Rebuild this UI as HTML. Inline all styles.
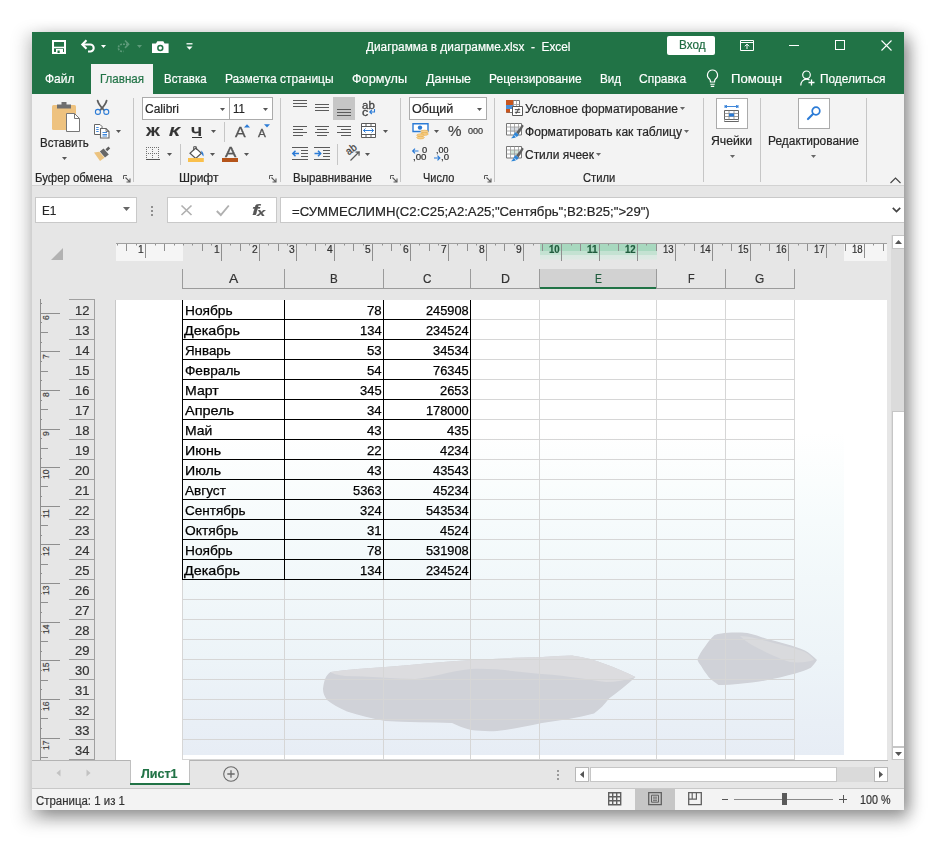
<!DOCTYPE html>
<html lang="ru"><head><meta charset="utf-8"><title>Excel</title><style>
html,body{margin:0;padding:0;background:#fff;}
body{width:936px;height:842px;position:relative;overflow:hidden;font-family:"Liberation Sans",sans-serif;}
.a{position:absolute;box-sizing:border-box;}
.t{position:absolute;white-space:pre;transform-origin:0 50%;-webkit-text-stroke-width:.2px;}
.win{box-shadow:5px 5.7px 16.1px -1.15px rgba(0,0,0,.451),-2.2px 7.2px 14.8px 7.3px rgba(0,0,0,.106);}
svg{overflow:visible}
</style></head><body>
<div class="a win" style="left:32px;top:32px;width:872px;height:778px;background:#e6e6e6"></div><div class="a" style="left:32px;top:32px;width:872px;height:62px;background:#217346;"></div><div class="a" style="left:32px;top:94px;width:872px;height:91px;background:#f3f3f3;"></div><div class="a" style="left:32px;top:185px;width:872px;height:1px;background:#d2d2d2;"></div><div class="a" style="left:91px;top:64px;width:62px;height:30px;background:#f3f3f3;"></div><svg class="a" style="left:52px;top:40px;" width="14" height="14" viewBox="0 0 14 14"><path d="M1 1h12v12h-12z" fill="none" stroke="#fff" stroke-width="2"/><path d="M1 7.500h12" stroke="#fff" stroke-width="1.600"/><path d="M4 9h7v4h-7z" fill="#fff"/><path d="M5.500 10.500h2.200v2.500h-2.200z" fill="#217346"/></svg><svg class="a" style="left:80px;top:39px;" width="16" height="14" viewBox="0 0 16 14"><path d="M2.500 5.500h7.700a3.500 3.500 0 0 1 0 7h-2.200" fill="none" stroke="#fff" stroke-width="2.100"/><path d="M6.500 1.300l-4.200 4.200l4.200 4.200" fill="none" stroke="#fff" stroke-width="2.100"/></svg><svg class="a" style="left:100.0px;top:44.0px;" width="7" height="5" viewBox="0 0 7 5"><path d="M1 1h5l-2.5 3z" fill="#fff"/></svg><svg class="a" style="left:116px;top:39px;" width="16" height="14" viewBox="0 0 16 14"><path d="M12 5.200h-6a3.600 3.600 0 0 0 0 7.200h1.500" fill="none" stroke="#5d9a79" stroke-width="1.600" stroke-dasharray="2 1"/><path d="M9 1.500l3.600 3.700l-3.600 3.700" fill="none" stroke="#5d9a79" stroke-width="1.600"/></svg><svg class="a" style="left:136.0px;top:44.0px;" width="7" height="5" viewBox="0 0 7 5"><path d="M1 1h5l-2.5 3z" fill="#5d9a79"/></svg><svg class="a" style="left:152px;top:41px;" width="17" height="12" viewBox="0 0 17 12"><path d="M0 2.500h4l1.300-2.300h6l1.300 2.300h4v9.500h-16.600z" fill="#fff"/><circle cx="8.300" cy="7" r="3.200" fill="#217346"/><circle cx="8.300" cy="7" r="1.700" fill="#fff"/></svg><svg class="a" style="left:185.5px;top:43px;" width="7" height="8" viewBox="0 0 7 8"><path d="M0.5 0.8h6" stroke="#fff" stroke-width="1.3"/><path d="M0.5 3.5h6l-3 3.2z" fill="#fff"/></svg><span class="t" style="left:366.3px;top:39.0px;line-height:16px;font-size:12px;color:#fff;transform:scaleX(0.9857);">Диаграмма в диаграмме.xlsx  -  Excel</span><div class="a" style="left:667px;top:36px;width:48px;height:19px;background:#fff;border-radius:2px;"></div><span class="t" style="left:678.5px;top:37.3px;line-height:16px;font-size:12.5px;color:#1e6b41;transform:scaleX(0.9370);">Вход</span><svg class="a" style="left:740px;top:40px;" width="14" height="11" viewBox="0 0 14 11"><path d="M0.5 0.5h13v10h-13z" fill="none" stroke="#fff"/><path d="M0.5 2.5h13" stroke="#fff" stroke-width="1"/><path d="M7 9V4.2M4.8 6.3L7 4.1l2.2 2.2" fill="none" stroke="#fff" stroke-width="1"/></svg><div class="a" style="left:789px;top:45px;width:10px;height:1px;background:#fff;"></div><div class="a" style="left:835px;top:40px;width:10px;height:10px;border:1px solid #fff;"></div><svg class="a" style="left:881px;top:40px;" width="11" height="11" viewBox="0 0 11 11"><path d="M0.5 0.5l10 10M10.5 0.5l-10 10" stroke="#fff" stroke-width="1.1"/></svg><span class="t" style="left:44.6px;top:69.8px;line-height:17px;font-size:13px;color:#fff;transform:scaleX(0.9215);">Файл</span><span class="t" style="left:163.8px;top:69.8px;line-height:17px;font-size:13px;color:#fff;transform:scaleX(0.8806);">Вставка</span><span class="t" style="left:225.2px;top:69.8px;line-height:17px;font-size:13px;color:#fff;transform:scaleX(0.9205);">Разметка страницы</span><span class="t" style="left:352.2px;top:69.8px;line-height:17px;font-size:13px;color:#fff;transform:scaleX(0.9732);">Формулы</span><span class="t" style="left:425.7px;top:69.8px;line-height:17px;font-size:13px;color:#fff;transform:scaleX(0.9594);">Данные</span><span class="t" style="left:489.2px;top:69.8px;line-height:17px;font-size:13px;color:#fff;transform:scaleX(0.9220);">Рецензирование</span><span class="t" style="left:599.7px;top:69.8px;line-height:17px;font-size:13px;color:#fff;transform:scaleX(0.8950);">Вид</span><span class="t" style="left:638.7px;top:69.8px;line-height:17px;font-size:13px;color:#fff;transform:scaleX(0.9227);">Справка</span><span class="t" style="left:731.2px;top:69.8px;line-height:17px;font-size:13px;color:#fff;transform:scaleX(1.0086);">Помощн</span><span class="t" style="left:819.7px;top:69.8px;line-height:17px;font-size:13px;color:#fff;transform:scaleX(0.9131);">Поделиться</span><span class="t" style="left:99.7px;top:69.8px;line-height:17px;font-size:13px;color:#217346;transform:scaleX(0.8904);">Главная</span><svg class="a" style="left:706px;top:69px;" width="13" height="20" viewBox="0 0 13 20"><path d="M6.5 1a5 5 0 0 1 3 9c-.8.8-1 1.6-1 3h-4c0-1.400-.2-2.200-1-3a5 5 0 0 1 3-9z" fill="none" stroke="#fff" stroke-width="1.2"/><path d="M4.3 15.200h4.400M4.800 17.400h3.400" stroke="#fff" stroke-width="1.1"/></svg><svg class="a" style="left:800px;top:70px;" width="16" height="17" viewBox="0 0 16 17"><circle cx="6.5" cy="4.8" r="3.8" fill="none" stroke="#fff" stroke-width="1.2"/><path d="M0.8 15.500c0-3.800 2.500-6.300 5.700-6.300c1.200 0 2.200.3 3 .8" fill="none" stroke="#fff" stroke-width="1.2"/><path d="M11.500 9.500v6M8.500 12.500h6" stroke="#fff" stroke-width="1.3"/></svg><div class="a" style="left:133px;top:98px;width:1px;height:84px;background:#c6c6c6;"></div><div class="a" style="left:280px;top:98px;width:1px;height:84px;background:#c6c6c6;"></div><div class="a" style="left:400px;top:98px;width:1px;height:84px;background:#c6c6c6;"></div><div class="a" style="left:494px;top:98px;width:1px;height:84px;background:#c6c6c6;"></div><div class="a" style="left:703px;top:98px;width:1px;height:84px;background:#c6c6c6;"></div><div class="a" style="left:760px;top:98px;width:1px;height:84px;background:#c6c6c6;"></div><div class="a" style="left:866px;top:98px;width:1px;height:84px;background:#c6c6c6;"></div><svg class="a" style="left:51px;top:101px;" width="31" height="32" viewBox="0 0 31 32"><rect x="1" y="4" width="24" height="25" rx="1.500" fill="#eec27f"/><path d="M6 3.500h14v4h-14z" fill="#6f6f6f"/><path d="M10.500 1h5v3h-5z" fill="#6f6f6f"/><path d="M15.500 12.500h8l5 5v13h-13z" fill="#fff" stroke="#777" stroke-width="1"/><path d="M23.500 12.500v5h5" fill="none" stroke="#777" stroke-width="1"/></svg><span class="t" style="left:39.8px;top:134.5px;line-height:16px;font-size:12px;color:#262626;transform:scaleX(0.9580);">Вставить</span><svg class="a" style="left:60.5px;top:155.5px;" width="7" height="5" viewBox="0 0 7 5"><path d="M1 1h5l-2.5 3z" fill="#555"/></svg><svg class="a" style="left:94px;top:100px;" width="16" height="16" viewBox="0 0 16 16"><path d="M3.600 0.600C4.300 3.500 6 6 9.800 9.800M12.600 0.600C11.900 3.500 10.200 6 6.400 9.800" stroke="#5e5e5e" stroke-width="1.900" fill="none" stroke-linecap="round"/><circle cx="3.900" cy="11.900" r="2.500" fill="none" stroke="#2b7bd6" stroke-width="1.100"/><circle cx="12.300" cy="11.900" r="2.500" fill="none" stroke="#2b7bd6" stroke-width="1.100"/></svg><svg class="a" style="left:94px;top:124px;" width="16" height="14" viewBox="0 0 16 14"><path d="M0.500 0.500h5.500l2 2v8h-7.500z" fill="#fff" stroke="#666"/><path d="M6.500 4.500h5.500l3 3v6.500h-8.500z" fill="#fff" stroke="#666" stroke-width="1.100"/><path d="M12 4.500v3h3" fill="none" stroke="#666" stroke-width=".800"/><path d="M8.500 8.500h4.500M8.500 10.500h4.500M8.500 12h4.500" stroke="#2b7bd6" stroke-width=".900"/><path d="M2.200 3.500h2.500M2.200 5.500h2.500M2.200 7.500h2.500" stroke="#2b7bd6" stroke-width=".900"/></svg><svg class="a" style="left:115.0px;top:129.0px;" width="7" height="5" viewBox="0 0 7 5"><path d="M1 1h5l-2.5 3z" fill="#555"/></svg><svg class="a" style="left:93px;top:146px;" width="18" height="16" viewBox="0 0 18 16"><path d="M12.500 3.200l3-2.700l1.700 2l-3 2.700z" fill="#5e5e5e"/><path d="M6.800 5.600l3.800-3.200l5.200 6l-3.800 3.200z" fill="#666"/><path d="M1 6.600l5.300-.800l5.200 6l-4.500 3.200c-2.200-2.800-3.800-5.600-6-8.400z" fill="#ecc37f"/></svg><span class="t" style="left:34.8px;top:170.3px;line-height:16px;font-size:12px;color:#262626;transform:scaleX(0.9484);">Буфер обмена</span><svg class="a" style="left:122.5px;top:174.5px;" width="8" height="8" viewBox="0 0 8 8"><path d="M0.500 4v-3.500h3.500" fill="none" stroke="#5a5a5a" stroke-width="1"/><path d="M2.500 2.500l4.300 4.300M7 3.500v3.500h-3.500" fill="none" stroke="#5a5a5a" stroke-width="1.100"/></svg><div class="a" style="left:142px;top:97px;width:88px;height:23px;background:#fff;border:1px solid #ababab;"></div><div class="a" style="left:229px;top:97px;width:44px;height:23px;background:#fff;border:1px solid #ababab;"></div><span class="t" style="left:145.3px;top:100.5px;line-height:16px;font-size:12px;color:#262626;transform:scaleX(1.0007);">Calibri</span><svg class="a" style="left:218.5px;top:106.5px;" width="7" height="5" viewBox="0 0 7 5"><path d="M1 1h5l-2.5 3z" fill="#555"/></svg><span class="t" style="left:232.9px;top:100.5px;line-height:16px;font-size:12px;color:#262626;transform:scaleX(0.9496);">11</span><svg class="a" style="left:262.0px;top:106.5px;" width="7" height="5" viewBox="0 0 7 5"><path d="M1 1h5l-2.5 3z" fill="#555"/></svg><span class="t" style="left:145.9px;top:122.5px;line-height:17px;font-size:13px;color:#333;transform:scaleX(1.1796);font-weight:bold;">Ж</span><span class="t" style="left:168.9px;top:122.5px;line-height:17px;font-size:13px;color:#333;transform:scaleX(1.3575);font-weight:bold;font-style:italic;">К</span><span class="t" style="left:191.2px;top:122.5px;line-height:17px;font-size:13px;color:#333;transform:scaleX(1.1990);font-weight:bold;">Ч</span><div class="a" style="left:192px;top:136.5px;width:9.5px;height:1.3px;background:#333;"></div><svg class="a" style="left:209.8px;top:129.0px;" width="7" height="5" viewBox="0 0 7 5"><path d="M1 1h5l-2.5 3z" fill="#555"/></svg><div class="a" style="left:224px;top:122px;width:1px;height:20px;background:#c6c6c6;"></div><span class="t" style="left:235.2px;top:122.7px;line-height:18px;font-size:14px;color:#555;transform:scaleX(1.1430);-webkit-text-stroke:.3px #555;">A</span><svg class="a" style="left:244px;top:124px;" width="6" height="4" viewBox="0 0 6 4"><path d="M0 3.500l3-3.200l3 3.200z" fill="#2b7bd6"/></svg><span class="t" style="left:257.8px;top:125.8px;line-height:14px;font-size:11px;color:#555;transform:scaleX(1.0649);-webkit-text-stroke:.3px #555;">A</span><svg class="a" style="left:264px;top:124px;" width="6" height="4" viewBox="0 0 6 4"><path d="M0 0.300h6l-3 3.200z" fill="#2b7bd6"/></svg><svg class="a" style="left:146px;top:147px;" width="14" height="13" viewBox="0 0 14 13"><g shape-rendering="crispEdges"><path d="M0 0.500h13M0 6.500h13M0.500 0v12M6.500 0v12M12.500 0v12" stroke="#707070" stroke-width="1" stroke-dasharray="1 1"/><path d="M0 12.500h13.500" stroke="#505050" stroke-width="1"/></g></svg><svg class="a" style="left:166.2px;top:152.0px;" width="7" height="5" viewBox="0 0 7 5"><path d="M1 1h5l-2.5 3z" fill="#555"/></svg><div class="a" style="left:180px;top:144px;width:1px;height:21px;background:#c6c6c6;"></div><svg class="a" style="left:187px;top:145px;" width="18" height="18" viewBox="0 0 18 18"><path d="M8.700 3l5.700 5.200l-5.700 5.200l-5.700-5.200z" fill="#fff" stroke="#555" stroke-width="1.200"/><path d="M6.700 5.500v-3.800h2.600v3.200" fill="none" stroke="#555" stroke-width="1"/><path d="M14.300 5.500c1.600 1.300 2.600 3.500 2.300 6c-1.400-1-2.300-2.600-2.300-6z" fill="#2b7bd6"/><path d="M1 13h15.800v4h-15.800z" fill="#fac04c"/></svg><svg class="a" style="left:209.0px;top:152.0px;" width="7" height="5" viewBox="0 0 7 5"><path d="M1 1h5l-2.5 3z" fill="#555"/></svg><span class="t" style="left:225.1px;top:143.4px;line-height:19px;font-size:14.8px;color:#595959;transform:scaleX(1.1419);-webkit-text-stroke:.4px #595959;">A</span><div class="a" style="left:222px;top:158px;width:16px;height:4px;background:#b5541a;"></div><svg class="a" style="left:242.9px;top:152.0px;" width="7" height="5" viewBox="0 0 7 5"><path d="M1 1h5l-2.5 3z" fill="#555"/></svg><span class="t" style="left:179.3px;top:170.3px;line-height:16px;font-size:12px;color:#262626;transform:scaleX(0.9989);">Шрифт</span><svg class="a" style="left:269px;top:174.5px;" width="8" height="8" viewBox="0 0 8 8"><path d="M0.500 4v-3.500h3.500" fill="none" stroke="#5a5a5a" stroke-width="1"/><path d="M2.500 2.500l4.300 4.300M7 3.500v3.500h-3.500" fill="none" stroke="#5a5a5a" stroke-width="1.100"/></svg><div class="a" style="left:293px;top:100px;width:14px;height:1px;background:#5a5a5a;"></div><div class="a" style="left:293px;top:103px;width:14px;height:1px;background:#5a5a5a;"></div><div class="a" style="left:293px;top:106px;width:14px;height:1px;background:#5a5a5a;"></div><div class="a" style="left:315px;top:104px;width:14px;height:1px;background:#5a5a5a;"></div><div class="a" style="left:315px;top:107px;width:14px;height:1px;background:#5a5a5a;"></div><div class="a" style="left:315px;top:110px;width:14px;height:1px;background:#5a5a5a;"></div><div class="a" style="left:333px;top:97px;width:22px;height:23px;background:#c6c6c6;"></div><div class="a" style="left:337px;top:109px;width:14px;height:1px;background:#5a5a5a;"></div><div class="a" style="left:337px;top:112px;width:14px;height:1px;background:#5a5a5a;"></div><div class="a" style="left:337px;top:115px;width:14px;height:1px;background:#5a5a5a;"></div><span class="t" style="left:362.4px;top:97.8px;line-height:14px;font-size:10.5px;color:#444;transform:scaleX(1.0918);-webkit-text-stroke:.3px #444;">ab</span><span class="t" style="left:362.4px;top:104.5px;line-height:14px;font-size:10.5px;color:#444;transform:scaleX(1.1924);-webkit-text-stroke:.3px #444;">c</span><svg class="a" style="left:369px;top:109px;" width="7" height="6" viewBox="0 0 7 6"><path d="M5.500 0v3h-4.500M2.800 1l-2 2l2 2" fill="none" stroke="#2b7bd6" stroke-width="1.100"/></svg><div class="a" style="left:293px;top:126px;width:14px;height:1px;background:#5a5a5a;"></div><div class="a" style="left:293px;top:129px;width:10px;height:1px;background:#5a5a5a;"></div><div class="a" style="left:293px;top:132px;width:14px;height:1px;background:#5a5a5a;"></div><div class="a" style="left:293px;top:135px;width:10px;height:1px;background:#5a5a5a;"></div><div class="a" style="left:315px;top:126px;width:14px;height:1px;background:#5a5a5a;"></div><div class="a" style="left:317px;top:129px;width:10px;height:1px;background:#5a5a5a;"></div><div class="a" style="left:315px;top:132px;width:14px;height:1px;background:#5a5a5a;"></div><div class="a" style="left:317px;top:135px;width:10px;height:1px;background:#5a5a5a;"></div><div class="a" style="left:337px;top:126px;width:14px;height:1px;background:#5a5a5a;"></div><div class="a" style="left:341px;top:129px;width:10px;height:1px;background:#5a5a5a;"></div><div class="a" style="left:337px;top:132px;width:14px;height:1px;background:#5a5a5a;"></div><div class="a" style="left:341px;top:135px;width:10px;height:1px;background:#5a5a5a;"></div><svg class="a" style="left:361px;top:123px;" width="16" height="15" viewBox="0 0 16 15"><path d="M0.500 0.500h14v14h-14z" fill="#fff" stroke="#5a5a5a"/><path d="M0.500 3.500h14M0.500 11.500h14M5 0.500v3M10 0.500v3M5 11.500v3M10 11.500v3" stroke="#5a5a5a" stroke-width="1"/><path d="M2.500 7.500h10M4.500 5.500l-2 2l2 2M10.500 5.500l2 2l-2 2" fill="none" stroke="#2b7bd6" stroke-width="1"/></svg><svg class="a" style="left:382.0px;top:129.0px;" width="7" height="5" viewBox="0 0 7 5"><path d="M1 1h5l-2.5 3z" fill="#555"/></svg><div class="a" style="left:292px;top:147px;width:16px;height:1px;background:#5a5a5a;"></div><div class="a" style="left:301px;top:150px;width:7px;height:1px;background:#5a5a5a;"></div><div class="a" style="left:301px;top:153px;width:7px;height:1px;background:#5a5a5a;"></div><div class="a" style="left:301px;top:156px;width:7px;height:1px;background:#5a5a5a;"></div><div class="a" style="left:292px;top:159px;width:16px;height:1px;background:#5a5a5a;"></div><svg class="a" style="left:292px;top:150px;" width="8" height="7" viewBox="0 0 8 7"><path d="M7 3.500h-5.500M3.500 0.800l-2.700 2.700l2.700 2.700" fill="none" stroke="#2b7bd6" stroke-width="1.500"/></svg><div class="a" style="left:314px;top:147px;width:16px;height:1px;background:#5a5a5a;"></div><div class="a" style="left:323px;top:150px;width:7px;height:1px;background:#5a5a5a;"></div><div class="a" style="left:323px;top:153px;width:7px;height:1px;background:#5a5a5a;"></div><div class="a" style="left:323px;top:156px;width:7px;height:1px;background:#5a5a5a;"></div><div class="a" style="left:314px;top:159px;width:16px;height:1px;background:#5a5a5a;"></div><svg class="a" style="left:314px;top:150px;" width="8" height="7" viewBox="0 0 8 7"><path d="M0.500 3.500h5.500M4 0.800l2.700 2.700l-2.700 2.700" fill="none" stroke="#2b7bd6" stroke-width="1.500"/></svg><div class="a" style="left:337px;top:144px;width:1px;height:21px;background:#c6c6c6;"></div><svg class="a" style="left:344px;top:146px;" width="18" height="16" viewBox="0 0 18 16"><text x="3" y="8" font-size="10.500" fill="#444" stroke="#444" stroke-width=".3" transform="rotate(-38 6 6)" font-family="Liberation Sans, sans-serif" textLength="11" lengthAdjust="spacingAndGlyphs">ab</text><path d="M6.500 14.500l8.500-8.500M11.500 6.200l3.700-.2l-.2 3.700" fill="none" stroke="#5a5a5a" stroke-width="1.200"/></svg><svg class="a" style="left:364.0px;top:152.0px;" width="7" height="5" viewBox="0 0 7 5"><path d="M1 1h5l-2.5 3z" fill="#555"/></svg><span class="t" style="left:292.8px;top:170.3px;line-height:16px;font-size:12px;color:#262626;transform:scaleX(0.9556);">Выравнивание</span><svg class="a" style="left:389.5px;top:174.5px;" width="8" height="8" viewBox="0 0 8 8"><path d="M0.500 4v-3.500h3.500" fill="none" stroke="#5a5a5a" stroke-width="1"/><path d="M2.500 2.500l4.300 4.300M7 3.500v3.500h-3.500" fill="none" stroke="#5a5a5a" stroke-width="1.100"/></svg><div class="a" style="left:409px;top:97px;width:78px;height:23px;background:#fff;border:1px solid #ababab;"></div><span class="t" style="left:411.9px;top:100.8px;line-height:16px;font-size:12.5px;color:#262626;transform:scaleX(1.0063);">Общий</span><svg class="a" style="left:475.5px;top:106.5px;" width="7" height="5" viewBox="0 0 7 5"><path d="M1 1h5l-2.5 3z" fill="#555"/></svg><svg class="a" style="left:411.5px;top:123px;" width="17" height="16" viewBox="0 0 17 16"><path d="M1 0.700h15v7.800h-15z" fill="#fff" stroke="#2b7bd6" stroke-width="1.400"/><circle cx="8" cy="4.600" r="2.200" fill="#2b7bd6"/><ellipse cx="12.500" cy="8.500" rx="3.800" ry="1.300" fill="#f5cf8e" stroke="#e9b04c" stroke-width=".7"/><ellipse cx="12.500" cy="11" rx="3.800" ry="1.300" fill="#f5cf8e" stroke="#e9b04c" stroke-width=".7"/><ellipse cx="8.500" cy="12.200" rx="3.800" ry="1.300" fill="#f5cf8e" stroke="#e9b04c" stroke-width=".7"/><ellipse cx="8.500" cy="14.600" rx="3.800" ry="1.300" fill="#f5cf8e" stroke="#e9b04c" stroke-width=".7"/></svg><svg class="a" style="left:432.9px;top:129.0px;" width="7" height="5" viewBox="0 0 7 5"><path d="M1 1h5l-2.5 3z" fill="#555"/></svg><span class="t" style="left:447.7px;top:121.9px;line-height:19px;font-size:14.5px;color:#444;transform:scaleX(1.0491);">%</span><span class="t" style="left:468.4px;top:124.5px;line-height:12px;font-size:9.5px;color:#333;transform:scaleX(0.9546);">000</span><svg class="a" style="left:412px;top:148px;" width="7" height="6" viewBox="0 0 7 6"><path d="M6.500 3h-5.500M3 0.700l-2.300 2.300l2.300 2.300" fill="none" stroke="#2b7bd6" stroke-width="1.200"/></svg><span class="t" style="left:421.5px;top:144.8px;line-height:11px;font-size:8.5px;color:#333;transform:scaleX(1.1026);">0</span><span class="t" style="left:413.2px;top:152.0px;line-height:11px;font-size:8.5px;color:#333;transform:scaleX(1.1430);">,00</span><svg class="a" style="left:434px;top:154.5px;" width="7" height="6" viewBox="0 0 7 6"><path d="M0 3h5.500M3.500 0.700l2.300 2.300l-2.300 2.300" fill="none" stroke="#2b7bd6" stroke-width="1.200"/></svg><span class="t" style="left:436.1px;top:144.8px;line-height:11px;font-size:8.5px;color:#333;transform:scaleX(1.0500);">,00</span><span class="t" style="left:440.5px;top:152.0px;line-height:11px;font-size:8.5px;color:#333;transform:scaleX(1.1306);">,0</span><span class="t" style="left:423.3px;top:170.3px;line-height:16px;font-size:12px;color:#262626;transform:scaleX(0.9109);">Число</span><svg class="a" style="left:483.5px;top:174.5px;" width="8" height="8" viewBox="0 0 8 8"><path d="M0.500 4v-3.500h3.500" fill="none" stroke="#5a5a5a" stroke-width="1"/><path d="M2.500 2.500l4.300 4.300M7 3.500v3.500h-3.500" fill="none" stroke="#5a5a5a" stroke-width="1.100"/></svg><svg class="a" style="left:506px;top:100px;" width="17" height="16" viewBox="0 0 17 16"><path d="M0.500 0.500h13v12h-13z" fill="#fff" stroke="#777"/><path d="M0 0h7.500v5h-7.500z" fill="#c8551e"/><path d="M0 5h7.500v4h-7.500z" fill="#4a8fd8"/><path d="M0 9h4v3.500h-4z" fill="#c8551e"/><path d="M7.500 0.500v6M10.500 0.500v6M7.500 4.500h6" stroke="#999" stroke-width=".800"/><path d="M6.500 6.500h10v9h-10z" fill="#fff" stroke="#555"/><path d="M8.800 9.700h5.400M8.800 12.300h5.400M13 8.300l-3 5.500" stroke="#444" stroke-width="1"/></svg><svg class="a" style="left:506px;top:123px;" width="17" height="16" viewBox="0 0 17 16"><path d="M0.500 0.500h15v11.500h-15z" fill="#fff" stroke="#777"/><path d="M4.500 4h7.500v5h-7.500z" fill="#d6dbe2"/><path d="M0.500 4h15M0.500 8h15M4.500 0.500v11.500M8.500 0.500v11.500M12.500 0.500v11.500" stroke="#999" stroke-width=".800"/><path d="M16.500 1.500l-6.500 8l2.500 2l5.200-8.500z" fill="#606060"/><path d="M9.500 9l3.300 2.700c-1.300 2.300-4 3.800-7.800 3.600c2.200-1.500 2.500-4 4.500-6.300z" fill="#2f86d6"/><path d="M8.500 12.500l2 1.600" stroke="#fff" stroke-width=".800"/></svg><svg class="a" style="left:506px;top:146px;" width="17" height="16" viewBox="0 0 17 16"><path d="M0.500 0.500h15v11.500h-15z" fill="#fff" stroke="#777"/><path d="M4.500 4h7.500v5h-7.500z" fill="#cfe3d8"/><path d="M0.500 4h15M0.500 8h15M4.500 0.500v11.500M8.500 0.500v11.500M12.500 0.500v11.500" stroke="#999" stroke-width=".800"/><path d="M16.500 1.500l-6.500 8l2.500 2l5.200-8.500z" fill="#606060"/><path d="M9.500 9l3.300 2.700c-1.300 2.300-4 3.800-7.800 3.600c2.200-1.500 2.500-4 4.500-6.300z" fill="#2f86d6"/><path d="M8.500 12.500l2 1.600" stroke="#fff" stroke-width=".800"/></svg><span class="t" style="left:524.6px;top:100.5px;line-height:16px;font-size:12px;color:#262626;transform:scaleX(1.0011);">Условное форматирование</span><svg class="a" style="left:679.0px;top:106.0px;" width="7" height="5" viewBox="0 0 7 5"><path d="M1 1h5l-2.5 3z" fill="#666"/></svg><span class="t" style="left:524.6px;top:123.5px;line-height:16px;font-size:12px;color:#262626;transform:scaleX(1.0051);">Форматировать как таблицу</span><svg class="a" style="left:683.2px;top:129.0px;" width="7" height="5" viewBox="0 0 7 5"><path d="M1 1h5l-2.5 3z" fill="#666"/></svg><span class="t" style="left:524.6px;top:146.5px;line-height:16px;font-size:12px;color:#262626;transform:scaleX(0.9953);">Стили ячеек</span><svg class="a" style="left:594.8px;top:152.0px;" width="7" height="5" viewBox="0 0 7 5"><path d="M1 1h5l-2.5 3z" fill="#666"/></svg><span class="t" style="left:582.9px;top:170.3px;line-height:16px;font-size:12px;color:#262626;transform:scaleX(0.9324);">Стили</span><div class="a" style="left:716px;top:97.5px;width:32px;height:31px;background:#fff;border:1px solid #ababab;"></div><svg class="a" style="left:723.5px;top:104.5px;" width="16" height="17" viewBox="0 0 16 17"><path d="M1 1.500h13M1 0v3M14 0v3M3 0.200l-2 1.300l2 1.300M12 0.200l2 1.300l-2 1.300" fill="none" stroke="#2b7bd6" stroke-width=".9"/><path d="M0.500 5.500h14v9h-14z" fill="#fff" stroke="#666"/><path d="M0.500 8.500h14M0.500 11.500h14M5 5.500v9M10 5.500v9" stroke="#888" stroke-width=".8"/><path d="M5 8.500h5v3h-5z" fill="#2b7bd6"/><path d="M0.500 15.500v1h14v-1" fill="none" stroke="#666"/></svg><span class="t" style="left:711.3px;top:132.9px;line-height:16px;font-size:12px;color:#262626;transform:scaleX(1.0196);">Ячейки</span><svg class="a" style="left:728.9px;top:153.5px;" width="7" height="5" viewBox="0 0 7 5"><path d="M1 1h5l-2.5 3z" fill="#666"/></svg><div class="a" style="left:798px;top:97.5px;width:32px;height:31px;background:#fff;border:1px solid #ababab;"></div><svg class="a" style="left:806.5px;top:106px;" width="15" height="14" viewBox="0 0 15 14"><circle cx="9" cy="5" r="3.800" fill="none" stroke="#2b7bd6" stroke-width="1.700"/><path d="M6 8l-5 5" stroke="#2b7bd6" stroke-width="2.200" stroke-linecap="round"/></svg><span class="t" style="left:768.3px;top:132.9px;line-height:16px;font-size:12px;color:#262626;transform:scaleX(0.9947);">Редактирование</span><svg class="a" style="left:809.5px;top:153.5px;" width="7" height="5" viewBox="0 0 7 5"><path d="M1 1h5l-2.5 3z" fill="#666"/></svg><svg class="a" style="left:890px;top:176.5px;" width="12" height="7" viewBox="0 0 12 7"><path d="M0.500 6l5-5l5 5" fill="none" stroke="#444" stroke-width="1.100"/></svg><div class="a" style="left:35px;top:197px;width:102px;height:26px;background:#fff;border:1px solid #c9c9c9;"></div><span class="t" style="left:42.0px;top:203.0px;line-height:16px;font-size:12.5px;color:#262626;transform:scaleX(0.9414);">E1</span><svg class="a" style="left:121.8px;top:205.7px;" width="9" height="6" viewBox="0 0 9 6"><path d="M1 1h7l-3.5 4z" fill="#666"/></svg><div class="a" style="left:151px;top:205.5px;width:2px;height:2px;background:#8f8f8f;"></div><div class="a" style="left:151px;top:209.5px;width:2px;height:2px;background:#8f8f8f;"></div><div class="a" style="left:151px;top:213.5px;width:2px;height:2px;background:#8f8f8f;"></div><div class="a" style="left:167px;top:197px;width:110px;height:26px;background:#fff;border:1px solid #c9c9c9;"></div><svg class="a" style="left:180.5px;top:205px;" width="11" height="11" viewBox="0 0 11 11"><path d="M0.500 0.500l10 9.500M10.500 0.500l-10 9.500" stroke="#b0b0b0" stroke-width="1.700"/></svg><svg class="a" style="left:215.5px;top:205px;" width="14" height="11" viewBox="0 0 14 11"><path d="M0.800 6l4 4l8-9.500" fill="none" stroke="#b0b0b0" stroke-width="1.900"/></svg><span class="t" style="left:251.7px;top:199.5px;line-height:20px;font-size:15px;color:#555;transform:scaleX(1.4400);font-weight:bold;font-style:italic;font-family:"Liberation Serif", serif;">f</span><span class="t" style="left:256.9px;top:205.0px;line-height:14px;font-size:10.5px;color:#555;transform:scaleX(1.4019);font-weight:bold;font-style:italic;font-family:"Liberation Serif", serif;">x</span><div class="a" style="left:280px;top:197px;width:624px;height:26px;background:#fff;border:1px solid #c9c9c9;border-right:none;"></div><span class="t" style="left:292.0px;top:202.5px;line-height:17px;font-size:13px;color:#262626;transform:scaleX(1.0123);">=СУММЕСЛИМН(C2:C25;A2:A25;&quot;Сентябрь&quot;;B2:B25;&quot;&gt;29&quot;)</span><svg class="a" style="left:891.5px;top:206.5px;" width="9" height="6" viewBox="0 0 9 6"><path d="M0.800 0.800l3.700 3.700l3.700-3.700" fill="none" stroke="#444" stroke-width="1.700"/></svg><svg class="a" style="left:51px;top:248px;" width="12" height="12" viewBox="0 0 12 12"><path d="M12 0v12h-12z" fill="#b2b2b2"/></svg><div class="a" style="left:116px;top:244px;width:67px;height:17px;background:#f5f5f5;"></div><div class="a" style="left:843.5px;top:244px;width:43.5px;height:17px;background:#f5f5f5;"></div><div class="a" style="left:540px;top:244px;width:117px;height:16px;background:linear-gradient(#a8d8bf 0,#a8d8bf 6.500px,#c4e2d2 7.500px,#c4e2d2 10.500px,#dbe9e2 11.500px,#dde9e3 15px,#e6e6e6 16px)"></div><div class="a" style="left:116px;top:243px;width:771px;height:1px;background:#a0a0a0;"></div><svg class="a" style="left:116px;top:244px;" width="771" height="17" viewBox="0 0 771 17"><path d="M1.5 0v1.5" stroke="#8f8f8f" stroke-width="1"/><path d="M10.5 0v7" stroke="#8f8f8f" stroke-width="1"/><path d="M20.5 0v1.5" stroke="#8f8f8f" stroke-width="1"/><path d="M29.5 0v14" stroke="#8f8f8f" stroke-width="1"/><path d="M39.5 0v1.5" stroke="#8f8f8f" stroke-width="1"/><path d="M48.5 0v7" stroke="#8f8f8f" stroke-width="1"/><path d="M58.5 0v1.5" stroke="#8f8f8f" stroke-width="1"/><path d="M67.5 0v1.5" stroke="#8f8f8f" stroke-width="1"/><path d="M76.5 0v1.5" stroke="#8f8f8f" stroke-width="1"/><path d="M86.5 0v7" stroke="#8f8f8f" stroke-width="1"/><path d="M95.5 0v1.5" stroke="#8f8f8f" stroke-width="1"/><path d="M105.5 0v17" stroke="#8f8f8f" stroke-width="1"/><path d="M114.5 0v1.5" stroke="#8f8f8f" stroke-width="1"/><path d="M124.5 0v7" stroke="#8f8f8f" stroke-width="1"/><path d="M133.5 0v1.5" stroke="#8f8f8f" stroke-width="1"/><path d="M143.5 0v17" stroke="#8f8f8f" stroke-width="1"/><path d="M152.5 0v1.5" stroke="#8f8f8f" stroke-width="1"/><path d="M162.5 0v7" stroke="#8f8f8f" stroke-width="1"/><path d="M171.5 0v1.5" stroke="#8f8f8f" stroke-width="1"/><path d="M180.5 0v17" stroke="#8f8f8f" stroke-width="1"/><path d="M190.5 0v1.5" stroke="#8f8f8f" stroke-width="1"/><path d="M199.5 0v7" stroke="#8f8f8f" stroke-width="1"/><path d="M209.5 0v1.5" stroke="#8f8f8f" stroke-width="1"/><path d="M218.5 0v17" stroke="#8f8f8f" stroke-width="1"/><path d="M228.5 0v1.5" stroke="#8f8f8f" stroke-width="1"/><path d="M237.5 0v7" stroke="#8f8f8f" stroke-width="1"/><path d="M247.5 0v1.5" stroke="#8f8f8f" stroke-width="1"/><path d="M256.5 0v17" stroke="#8f8f8f" stroke-width="1"/><path d="M266.5 0v1.5" stroke="#8f8f8f" stroke-width="1"/><path d="M275.5 0v7" stroke="#8f8f8f" stroke-width="1"/><path d="M284.5 0v1.5" stroke="#8f8f8f" stroke-width="1"/><path d="M294.5 0v17" stroke="#8f8f8f" stroke-width="1"/><path d="M303.5 0v1.5" stroke="#8f8f8f" stroke-width="1"/><path d="M313.5 0v7" stroke="#8f8f8f" stroke-width="1"/><path d="M322.5 0v1.5" stroke="#8f8f8f" stroke-width="1"/><path d="M332.5 0v17" stroke="#8f8f8f" stroke-width="1"/><path d="M341.5 0v1.5" stroke="#8f8f8f" stroke-width="1"/><path d="M351.5 0v7" stroke="#8f8f8f" stroke-width="1"/><path d="M360.5 0v1.5" stroke="#8f8f8f" stroke-width="1"/><path d="M370.5 0v17" stroke="#8f8f8f" stroke-width="1"/><path d="M379.5 0v1.5" stroke="#8f8f8f" stroke-width="1"/><path d="M388.5 0v7" stroke="#8f8f8f" stroke-width="1"/><path d="M398.5 0v1.5" stroke="#8f8f8f" stroke-width="1"/><path d="M407.5 0v17" stroke="#8f8f8f" stroke-width="1"/><path d="M417.5 0v1.5" stroke="#8f8f8f" stroke-width="1"/><path d="M426.5 0v7" stroke="#8f8f8f" stroke-width="1"/><path d="M436.5 0v1.5" stroke="#8f8f8f" stroke-width="1"/><path d="M445.5 0v17" stroke="#8f8f8f" stroke-width="1"/><path d="M455.5 0v1.5" stroke="#8f8f8f" stroke-width="1"/><path d="M464.5 0v7" stroke="#8f8f8f" stroke-width="1"/><path d="M474.5 0v1.5" stroke="#8f8f8f" stroke-width="1"/><path d="M483.5 0v17" stroke="#8f8f8f" stroke-width="1"/><path d="M492.5 0v1.5" stroke="#8f8f8f" stroke-width="1"/><path d="M502.5 0v7" stroke="#8f8f8f" stroke-width="1"/><path d="M511.5 0v1.5" stroke="#8f8f8f" stroke-width="1"/><path d="M521.5 0v17" stroke="#8f8f8f" stroke-width="1"/><path d="M530.5 0v1.5" stroke="#8f8f8f" stroke-width="1"/><path d="M540.5 0v7" stroke="#8f8f8f" stroke-width="1"/><path d="M549.5 0v1.5" stroke="#8f8f8f" stroke-width="1"/><path d="M559.5 0v17" stroke="#8f8f8f" stroke-width="1"/><path d="M568.5 0v1.5" stroke="#8f8f8f" stroke-width="1"/><path d="M578.5 0v7" stroke="#8f8f8f" stroke-width="1"/><path d="M587.5 0v1.5" stroke="#8f8f8f" stroke-width="1"/><path d="M596.5 0v17" stroke="#8f8f8f" stroke-width="1"/><path d="M606.5 0v1.5" stroke="#8f8f8f" stroke-width="1"/><path d="M615.5 0v7" stroke="#8f8f8f" stroke-width="1"/><path d="M625.5 0v1.5" stroke="#8f8f8f" stroke-width="1"/><path d="M634.5 0v17" stroke="#8f8f8f" stroke-width="1"/><path d="M644.5 0v1.5" stroke="#8f8f8f" stroke-width="1"/><path d="M653.5 0v7" stroke="#8f8f8f" stroke-width="1"/><path d="M663.5 0v1.5" stroke="#8f8f8f" stroke-width="1"/><path d="M672.5 0v17" stroke="#8f8f8f" stroke-width="1"/><path d="M682.5 0v1.5" stroke="#8f8f8f" stroke-width="1"/><path d="M691.5 0v7" stroke="#8f8f8f" stroke-width="1"/><path d="M700.5 0v1.5" stroke="#8f8f8f" stroke-width="1"/><path d="M710.5 0v14" stroke="#8f8f8f" stroke-width="1"/><path d="M719.5 0v1.5" stroke="#8f8f8f" stroke-width="1"/><path d="M729.5 0v7" stroke="#8f8f8f" stroke-width="1"/><path d="M738.5 0v1.5" stroke="#8f8f8f" stroke-width="1"/><path d="M748.5 0v14" stroke="#8f8f8f" stroke-width="1"/><path d="M757.5 0v1.5" stroke="#8f8f8f" stroke-width="1"/><path d="M767.5 0v7" stroke="#8f8f8f" stroke-width="1"/></svg><span class="t" style="left:213.7px;top:243.0px;line-height:13px;font-size:10px;color:#333;transform:scaleX(1.0247);">1</span><span class="t" style="left:251.5px;top:243.0px;line-height:13px;font-size:10px;color:#333;transform:scaleX(1.0247);">2</span><span class="t" style="left:289.4px;top:243.0px;line-height:13px;font-size:10px;color:#333;transform:scaleX(1.0247);">3</span><span class="t" style="left:327.2px;top:243.0px;line-height:13px;font-size:10px;color:#333;transform:scaleX(1.0247);">4</span><span class="t" style="left:365.0px;top:243.0px;line-height:13px;font-size:10px;color:#333;transform:scaleX(1.0247);">5</span><span class="t" style="left:402.8px;top:243.0px;line-height:13px;font-size:10px;color:#333;transform:scaleX(1.0247);">6</span><span class="t" style="left:440.6px;top:243.0px;line-height:13px;font-size:10px;color:#333;transform:scaleX(1.0247);">7</span><span class="t" style="left:478.5px;top:243.0px;line-height:13px;font-size:10px;color:#333;transform:scaleX(1.0247);">8</span><span class="t" style="left:516.3px;top:243.0px;line-height:13px;font-size:10px;color:#333;transform:scaleX(1.0247);">9</span><span class="t" style="left:549.1px;top:243.0px;line-height:13px;font-size:10px;color:#1f5c3d;transform:scaleX(0.9618);font-weight:bold;">10</span><span class="t" style="left:586.9px;top:243.0px;line-height:13px;font-size:10px;color:#1f5c3d;transform:scaleX(1.0115);font-weight:bold;">11</span><span class="t" style="left:624.7px;top:243.0px;line-height:13px;font-size:10px;color:#1f5c3d;transform:scaleX(0.9618);font-weight:bold;">12</span><span class="t" style="left:662.6px;top:243.0px;line-height:13px;font-size:10px;color:#333;transform:scaleX(0.9618);">13</span><span class="t" style="left:700.4px;top:243.0px;line-height:13px;font-size:10px;color:#333;transform:scaleX(0.9618);">14</span><span class="t" style="left:738.2px;top:243.0px;line-height:13px;font-size:10px;color:#333;transform:scaleX(0.9618);">15</span><span class="t" style="left:776.0px;top:243.0px;line-height:13px;font-size:10px;color:#333;transform:scaleX(0.9618);">16</span><span class="t" style="left:813.8px;top:243.0px;line-height:13px;font-size:10px;color:#333;transform:scaleX(0.9618);">17</span><span class="t" style="left:851.7px;top:243.0px;line-height:13px;font-size:10px;color:#333;transform:scaleX(0.9618);">18</span><span class="t" style="left:138.1px;top:243.0px;line-height:13px;font-size:10px;color:#333;transform:scaleX(1.0247);">1</span><div class="a" style="left:539px;top:269px;width:118px;height:19px;background:#d2d2d2;"></div><div class="a" style="left:182px;top:288px;width:613px;height:1px;background:#9b9b9b;"></div><div class="a" style="left:539px;top:287px;width:118px;height:2px;background:#217346;"></div><div class="a" style="left:182px;top:269px;width:1px;height:20px;background:#9b9b9b;"></div><div class="a" style="left:284px;top:269px;width:1px;height:20px;background:#9b9b9b;"></div><span class="t" style="left:228.9px;top:270.5px;line-height:16px;font-size:12px;color:#333;transform:scaleX(1.1527);">A</span><div class="a" style="left:383px;top:269px;width:1px;height:20px;background:#9b9b9b;"></div><span class="t" style="left:330.1px;top:270.5px;line-height:16px;font-size:12px;color:#333;transform:scaleX(0.9656);">B</span><div class="a" style="left:470px;top:269px;width:1px;height:20px;background:#9b9b9b;"></div><span class="t" style="left:422.8px;top:270.5px;line-height:16px;font-size:12px;color:#333;transform:scaleX(0.9733);">C</span><div class="a" style="left:539px;top:269px;width:1px;height:20px;background:#9b9b9b;"></div><span class="t" style="left:500.5px;top:270.5px;line-height:16px;font-size:12px;color:#333;transform:scaleX(1.0309);">D</span><div class="a" style="left:656px;top:269px;width:1px;height:20px;background:#9b9b9b;"></div><span class="t" style="left:594.5px;top:270.5px;line-height:16px;font-size:12px;color:#1f5c3d;transform:scaleX(0.8658);">E</span><div class="a" style="left:725px;top:269px;width:1px;height:20px;background:#9b9b9b;"></div><span class="t" style="left:687.7px;top:270.5px;line-height:16px;font-size:12px;color:#333;transform:scaleX(0.9042);">F</span><div class="a" style="left:794px;top:269px;width:1px;height:20px;background:#9b9b9b;"></div><span class="t" style="left:755.4px;top:270.5px;line-height:16px;font-size:12px;color:#333;transform:scaleX(0.9889);">G</span><div class="a" style="left:40px;top:299px;width:1px;height:461px;background:#8f8f8f;"></div><svg class="a" style="left:40px;top:300px;" width="20" height="460" viewBox="0 0 20 460"><path d="M0 3.5h2" stroke="#8f8f8f" stroke-width="1"/><path d="M0 13.5h20" stroke="#8f8f8f" stroke-width="1"/><path d="M0 22.5h2" stroke="#8f8f8f" stroke-width="1"/><path d="M0 32.5h8" stroke="#8f8f8f" stroke-width="1"/><path d="M0 42.5h2" stroke="#8f8f8f" stroke-width="1"/><path d="M0 51.5h20" stroke="#8f8f8f" stroke-width="1"/><path d="M0 61.5h2" stroke="#8f8f8f" stroke-width="1"/><path d="M0 71.5h8" stroke="#8f8f8f" stroke-width="1"/><path d="M0 80.5h2" stroke="#8f8f8f" stroke-width="1"/><path d="M0 90.5h20" stroke="#8f8f8f" stroke-width="1"/><path d="M0 100.5h2" stroke="#8f8f8f" stroke-width="1"/><path d="M0 109.5h8" stroke="#8f8f8f" stroke-width="1"/><path d="M0 119.5h2" stroke="#8f8f8f" stroke-width="1"/><path d="M0 129.5h20" stroke="#8f8f8f" stroke-width="1"/><path d="M0 138.5h2" stroke="#8f8f8f" stroke-width="1"/><path d="M0 148.5h8" stroke="#8f8f8f" stroke-width="1"/><path d="M0 158.5h2" stroke="#8f8f8f" stroke-width="1"/><path d="M0 167.5h20" stroke="#8f8f8f" stroke-width="1"/><path d="M0 177.5h2" stroke="#8f8f8f" stroke-width="1"/><path d="M0 186.5h8" stroke="#8f8f8f" stroke-width="1"/><path d="M0 196.5h2" stroke="#8f8f8f" stroke-width="1"/><path d="M0 206.5h20" stroke="#8f8f8f" stroke-width="1"/><path d="M0 215.5h2" stroke="#8f8f8f" stroke-width="1"/><path d="M0 225.5h8" stroke="#8f8f8f" stroke-width="1"/><path d="M0 235.5h2" stroke="#8f8f8f" stroke-width="1"/><path d="M0 244.5h20" stroke="#8f8f8f" stroke-width="1"/><path d="M0 254.5h2" stroke="#8f8f8f" stroke-width="1"/><path d="M0 264.5h8" stroke="#8f8f8f" stroke-width="1"/><path d="M0 273.5h2" stroke="#8f8f8f" stroke-width="1"/><path d="M0 283.5h20" stroke="#8f8f8f" stroke-width="1"/><path d="M0 293.5h2" stroke="#8f8f8f" stroke-width="1"/><path d="M0 302.5h8" stroke="#8f8f8f" stroke-width="1"/><path d="M0 312.5h2" stroke="#8f8f8f" stroke-width="1"/><path d="M0 322.5h20" stroke="#8f8f8f" stroke-width="1"/><path d="M0 331.5h2" stroke="#8f8f8f" stroke-width="1"/><path d="M0 341.5h8" stroke="#8f8f8f" stroke-width="1"/><path d="M0 351.5h2" stroke="#8f8f8f" stroke-width="1"/><path d="M0 360.5h20" stroke="#8f8f8f" stroke-width="1"/><path d="M0 370.5h2" stroke="#8f8f8f" stroke-width="1"/><path d="M0 380.5h8" stroke="#8f8f8f" stroke-width="1"/><path d="M0 389.5h2" stroke="#8f8f8f" stroke-width="1"/><path d="M0 399.5h20" stroke="#8f8f8f" stroke-width="1"/><path d="M0 409.5h2" stroke="#8f8f8f" stroke-width="1"/><path d="M0 418.5h8" stroke="#8f8f8f" stroke-width="1"/><path d="M0 428.5h2" stroke="#8f8f8f" stroke-width="1"/><path d="M0 438.5h20" stroke="#8f8f8f" stroke-width="1"/><path d="M0 447.5h2" stroke="#8f8f8f" stroke-width="1"/><path d="M0 457.5h8" stroke="#8f8f8f" stroke-width="1"/></svg><span class="t" style="left:41.5px;top:320.2px;font-size:8.500px;line-height:9px;color:#444;transform-origin:0 0;transform:rotate(-90deg)">6</span><span class="t" style="left:41.5px;top:358.8px;font-size:8.500px;line-height:9px;color:#444;transform-origin:0 0;transform:rotate(-90deg)">7</span><span class="t" style="left:41.5px;top:397.4px;font-size:8.500px;line-height:9px;color:#444;transform-origin:0 0;transform:rotate(-90deg)">8</span><span class="t" style="left:41.5px;top:436.1px;font-size:8.500px;line-height:9px;color:#444;transform-origin:0 0;transform:rotate(-90deg)">9</span><span class="t" style="left:41.5px;top:479.2px;font-size:8.500px;line-height:9px;color:#444;transform-origin:0 0;transform:rotate(-90deg)">10</span><span class="t" style="left:41.5px;top:517.8px;font-size:8.500px;line-height:9px;color:#444;transform-origin:0 0;transform:rotate(-90deg)">11</span><span class="t" style="left:41.5px;top:556.4px;font-size:8.500px;line-height:9px;color:#444;transform-origin:0 0;transform:rotate(-90deg)">12</span><span class="t" style="left:41.5px;top:595.0px;font-size:8.500px;line-height:9px;color:#444;transform-origin:0 0;transform:rotate(-90deg)">13</span><span class="t" style="left:41.5px;top:633.7px;font-size:8.500px;line-height:9px;color:#444;transform-origin:0 0;transform:rotate(-90deg)">14</span><span class="t" style="left:41.5px;top:672.3px;font-size:8.500px;line-height:9px;color:#444;transform-origin:0 0;transform:rotate(-90deg)">15</span><span class="t" style="left:41.5px;top:710.9px;font-size:8.500px;line-height:9px;color:#444;transform-origin:0 0;transform:rotate(-90deg)">16</span><span class="t" style="left:41.5px;top:749.5px;font-size:8.500px;line-height:9px;color:#444;transform-origin:0 0;transform:rotate(-90deg)">17</span><div class="a" style="left:94px;top:299px;width:1px;height:461px;background:#a0a0a0;"></div><div class="a" style="left:69px;top:319px;width:26px;height:1px;background:#a0a0a0;"></div><span class="t" style="left:74.8px;top:302.5px;line-height:16px;font-size:12px;color:#333;transform:scaleX(1.0809);">12</span><div class="a" style="left:69px;top:339px;width:26px;height:1px;background:#a0a0a0;"></div><span class="t" style="left:74.8px;top:322.5px;line-height:16px;font-size:12px;color:#333;transform:scaleX(1.0809);">13</span><div class="a" style="left:69px;top:359px;width:26px;height:1px;background:#a0a0a0;"></div><span class="t" style="left:74.8px;top:342.5px;line-height:16px;font-size:12px;color:#333;transform:scaleX(1.0809);">14</span><div class="a" style="left:69px;top:379px;width:26px;height:1px;background:#a0a0a0;"></div><span class="t" style="left:74.8px;top:362.5px;line-height:16px;font-size:12px;color:#333;transform:scaleX(1.0809);">15</span><div class="a" style="left:69px;top:399px;width:26px;height:1px;background:#a0a0a0;"></div><span class="t" style="left:74.8px;top:382.5px;line-height:16px;font-size:12px;color:#333;transform:scaleX(1.0809);">16</span><div class="a" style="left:69px;top:419px;width:26px;height:1px;background:#a0a0a0;"></div><span class="t" style="left:74.8px;top:402.5px;line-height:16px;font-size:12px;color:#333;transform:scaleX(1.0809);">17</span><div class="a" style="left:69px;top:439px;width:26px;height:1px;background:#a0a0a0;"></div><span class="t" style="left:74.8px;top:422.5px;line-height:16px;font-size:12px;color:#333;transform:scaleX(1.0809);">18</span><div class="a" style="left:69px;top:459px;width:26px;height:1px;background:#a0a0a0;"></div><span class="t" style="left:74.8px;top:442.5px;line-height:16px;font-size:12px;color:#333;transform:scaleX(1.0809);">19</span><div class="a" style="left:69px;top:479px;width:26px;height:1px;background:#a0a0a0;"></div><span class="t" style="left:74.8px;top:462.5px;line-height:16px;font-size:12px;color:#333;transform:scaleX(1.0809);">20</span><div class="a" style="left:69px;top:499px;width:26px;height:1px;background:#a0a0a0;"></div><span class="t" style="left:74.8px;top:482.5px;line-height:16px;font-size:12px;color:#333;transform:scaleX(1.0809);">21</span><div class="a" style="left:69px;top:519px;width:26px;height:1px;background:#a0a0a0;"></div><span class="t" style="left:74.8px;top:502.5px;line-height:16px;font-size:12px;color:#333;transform:scaleX(1.0809);">22</span><div class="a" style="left:69px;top:539px;width:26px;height:1px;background:#a0a0a0;"></div><span class="t" style="left:74.8px;top:522.5px;line-height:16px;font-size:12px;color:#333;transform:scaleX(1.0809);">23</span><div class="a" style="left:69px;top:559px;width:26px;height:1px;background:#a0a0a0;"></div><span class="t" style="left:74.8px;top:542.5px;line-height:16px;font-size:12px;color:#333;transform:scaleX(1.0809);">24</span><div class="a" style="left:69px;top:579px;width:26px;height:1px;background:#a0a0a0;"></div><span class="t" style="left:74.8px;top:562.5px;line-height:16px;font-size:12px;color:#333;transform:scaleX(1.0809);">25</span><div class="a" style="left:69px;top:599px;width:26px;height:1px;background:#a0a0a0;"></div><span class="t" style="left:74.8px;top:582.5px;line-height:16px;font-size:12px;color:#333;transform:scaleX(1.0809);">26</span><div class="a" style="left:69px;top:619px;width:26px;height:1px;background:#a0a0a0;"></div><span class="t" style="left:74.8px;top:602.5px;line-height:16px;font-size:12px;color:#333;transform:scaleX(1.0809);">27</span><div class="a" style="left:69px;top:639px;width:26px;height:1px;background:#a0a0a0;"></div><span class="t" style="left:74.8px;top:622.5px;line-height:16px;font-size:12px;color:#333;transform:scaleX(1.0809);">28</span><div class="a" style="left:69px;top:659px;width:26px;height:1px;background:#a0a0a0;"></div><span class="t" style="left:74.8px;top:642.5px;line-height:16px;font-size:12px;color:#333;transform:scaleX(1.0809);">29</span><div class="a" style="left:69px;top:679px;width:26px;height:1px;background:#a0a0a0;"></div><span class="t" style="left:74.8px;top:662.5px;line-height:16px;font-size:12px;color:#333;transform:scaleX(1.0809);">30</span><div class="a" style="left:69px;top:699px;width:26px;height:1px;background:#a0a0a0;"></div><span class="t" style="left:74.8px;top:682.5px;line-height:16px;font-size:12px;color:#333;transform:scaleX(1.0809);">31</span><div class="a" style="left:69px;top:719px;width:26px;height:1px;background:#a0a0a0;"></div><span class="t" style="left:74.8px;top:702.5px;line-height:16px;font-size:12px;color:#333;transform:scaleX(1.0809);">32</span><div class="a" style="left:69px;top:739px;width:26px;height:1px;background:#a0a0a0;"></div><span class="t" style="left:74.8px;top:722.5px;line-height:16px;font-size:12px;color:#333;transform:scaleX(1.0809);">33</span><div class="a" style="left:69px;top:759px;width:26px;height:1px;background:#a0a0a0;"></div><span class="t" style="left:74.8px;top:742.5px;line-height:16px;font-size:12px;color:#333;transform:scaleX(1.0809);">34</span><div class="a" style="left:69px;top:299px;width:26px;height:1px;background:#a0a0a0;"></div><div class="a" style="left:115px;top:300px;width:772px;height:460px;background:#fff;"></div><div class="a" style="left:115px;top:300px;width:1px;height:460px;background:#c8c8c8;"></div><div class="a" style="left:182px;top:300px;width:662px;height:455px;background:linear-gradient(180deg,#ffffff 0%,#ffffff 29%,#fafdfd 40%,#f6fbfc 48.500%,#f2f8fa 61.500%,#edf4f8 79%,#e9eff6 93%,#e7edf5 100%)"></div><svg class="a" style="left:0px;top:0px;" width="936" height="842" viewBox="0 0 936 842"><defs><filter id="bl" x="-5%" y="-20%" width="110%" height="140%"><feGaussianBlur stdDeviation="0.7"/></filter></defs>
<g filter="url(#bl)">
<path d="M323 689C324 680 326 675 330.500 672C348 669 366 668.500 385 667C414 664.500 442 662 471 660C495 658.500 520 657.500 542 657C553 656.500 563 655.500 572 655.500C584 657 595 660 605 664C616 668 626 672 635.500 677C627 685 618 692 609 698.500C605 704 600 709 594 713.500C578 718 560 720.500 542 723C527 726 512 729.500 497 731C488 731.500 479 731 471 730C464 728 458 726 452 723C430 722.500 407 722 385 721C372 718.500 359 715.500 347 711.500C339 708 332 704 327 700C324.500 696.500 323 693 323 689Z" fill="#d0d2d8"/>
<path d="M330.500 672C348 669 366 668.500 385 667C414 664.500 442 662 471 660C495 658.500 520 657.500 542 657C553 656.500 563 655.500 572 655.500C584 657 595 660 605 664C616 668 626 672 635.500 677C626 680 616 682 606 682C590 680 570 676 542 674C520 672 495 668 471 669C450 671 430 678 415 679C395 679 370 676 345 676C338 675 333 674 330.500 672Z" fill="#dcdcdf"/>
<path d="M697.300 659.600C699 655 702 650.500 705 646.500C708 642 711 638 714.600 635C719 633.500 723.500 633 728 632.700C734.500 632.500 741 632.500 747.300 633C754 634.500 760 636.500 766.500 638.800C773.500 640.500 780.500 642.500 787.700 644.600C793.500 646.500 799.500 648 805 650.400C809.500 653 813.500 656.500 817 660C815 663 813 665.500 810.800 667.700C806 670 800.500 672 795.400 673.500C786 676 776 678.500 766.500 680.200C757 682 747 683.200 737.700 684C731 684.800 724.500 685.200 718.500 685C715 682.500 711.500 680 708.800 677.300C706 673.500 703 669.500 701 665.800C699.500 663.800 698 661.800 697.300 659.600Z" fill="#d0d2d8"/>
<path d="M740 636C750 636.500 760 639 770 642C782 645 795 648 805 652C810 655 813 658 814 660C808 662 800 663 790 662C778 658 765 652 752 645C747 642 743 639 740 636Z" fill="#d9dadd"/>
</g></svg><div class="a" style="left:182px;top:319px;width:613px;height:1px;background:#d6d6d6;"></div><div class="a" style="left:182px;top:339px;width:613px;height:1px;background:#d6d6d6;"></div><div class="a" style="left:182px;top:359px;width:613px;height:1px;background:#d6d6d6;"></div><div class="a" style="left:182px;top:379px;width:613px;height:1px;background:#d6d6d6;"></div><div class="a" style="left:182px;top:399px;width:613px;height:1px;background:#d6d6d6;"></div><div class="a" style="left:182px;top:419px;width:613px;height:1px;background:#d6d6d6;"></div><div class="a" style="left:182px;top:439px;width:613px;height:1px;background:#d6d6d6;"></div><div class="a" style="left:182px;top:459px;width:613px;height:1px;background:#d6d6d6;"></div><div class="a" style="left:182px;top:479px;width:613px;height:1px;background:#d6d6d6;"></div><div class="a" style="left:182px;top:499px;width:613px;height:1px;background:#d6d6d6;"></div><div class="a" style="left:182px;top:519px;width:613px;height:1px;background:#d6d6d6;"></div><div class="a" style="left:182px;top:539px;width:613px;height:1px;background:#d6d6d6;"></div><div class="a" style="left:182px;top:559px;width:613px;height:1px;background:#d6d6d6;"></div><div class="a" style="left:182px;top:579px;width:613px;height:1px;background:#d6d6d6;"></div><div class="a" style="left:182px;top:599px;width:613px;height:1px;background:#d6d6d6;"></div><div class="a" style="left:182px;top:619px;width:613px;height:1px;background:#d6d6d6;"></div><div class="a" style="left:182px;top:639px;width:613px;height:1px;background:#d6d6d6;"></div><div class="a" style="left:182px;top:659px;width:613px;height:1px;background:#d6d6d6;"></div><div class="a" style="left:182px;top:679px;width:613px;height:1px;background:#d6d6d6;"></div><div class="a" style="left:182px;top:699px;width:613px;height:1px;background:#d6d6d6;"></div><div class="a" style="left:182px;top:719px;width:613px;height:1px;background:#d6d6d6;"></div><div class="a" style="left:182px;top:739px;width:613px;height:1px;background:#d6d6d6;"></div><div class="a" style="left:182px;top:759px;width:613px;height:1px;background:#d6d6d6;"></div><div class="a" style="left:284px;top:300px;width:1px;height:460px;background:#d6d6d6;"></div><div class="a" style="left:383px;top:300px;width:1px;height:460px;background:#d6d6d6;"></div><div class="a" style="left:470px;top:300px;width:1px;height:460px;background:#d6d6d6;"></div><div class="a" style="left:539px;top:300px;width:1px;height:460px;background:#d6d6d6;"></div><div class="a" style="left:656px;top:300px;width:1px;height:460px;background:#d6d6d6;"></div><div class="a" style="left:725px;top:300px;width:1px;height:460px;background:#d6d6d6;"></div><div class="a" style="left:794px;top:300px;width:1px;height:460px;background:#d6d6d6;"></div><div class="a" style="left:182px;top:300px;width:1px;height:460px;background:#d6d6d6;"></div><div class="a" style="left:182px;top:319px;width:289px;height:1px;background:#000;"></div><span class="t" style="left:185.0px;top:302.1px;line-height:17px;font-size:13px;color:#000;transform:scaleX(1.0565);-webkit-text-stroke:0.25px #000;">Ноябрь</span><span class="t" style="left:366.8px;top:302.1px;line-height:17px;font-size:13px;color:#000;transform:scaleX(1.0132);-webkit-text-stroke:0.25px #000;">78</span><span class="t" style="left:425.8px;top:302.1px;line-height:17px;font-size:13px;color:#000;transform:scaleX(0.9832);-webkit-text-stroke:0.25px #000;">245908</span><div class="a" style="left:182px;top:339px;width:289px;height:1px;background:#000;"></div><span class="t" style="left:184.2px;top:322.1px;line-height:17px;font-size:13px;color:#000;transform:scaleX(1.1040);-webkit-text-stroke:0.25px #000;">Декабрь</span><span class="t" style="left:359.8px;top:322.1px;line-height:17px;font-size:13px;color:#000;transform:scaleX(0.9980);-webkit-text-stroke:0.25px #000;">134</span><span class="t" style="left:425.8px;top:322.1px;line-height:17px;font-size:13px;color:#000;transform:scaleX(0.9832);-webkit-text-stroke:0.25px #000;">234524</span><div class="a" style="left:182px;top:359px;width:289px;height:1px;background:#000;"></div><span class="t" style="left:184.7px;top:342.1px;line-height:17px;font-size:13px;color:#000;transform:scaleX(1.0246);-webkit-text-stroke:0.25px #000;">Январь</span><span class="t" style="left:366.8px;top:342.1px;line-height:17px;font-size:13px;color:#000;transform:scaleX(1.0132);-webkit-text-stroke:0.25px #000;">53</span><span class="t" style="left:432.8px;top:342.1px;line-height:17px;font-size:13px;color:#000;transform:scaleX(0.9863);-webkit-text-stroke:0.25px #000;">34534</span><div class="a" style="left:182px;top:379px;width:289px;height:1px;background:#000;"></div><span class="t" style="left:184.7px;top:362.1px;line-height:17px;font-size:13px;color:#000;transform:scaleX(1.0495);-webkit-text-stroke:0.25px #000;">Февраль</span><span class="t" style="left:366.8px;top:362.1px;line-height:17px;font-size:13px;color:#000;transform:scaleX(1.0132);-webkit-text-stroke:0.25px #000;">54</span><span class="t" style="left:432.8px;top:362.1px;line-height:17px;font-size:13px;color:#000;transform:scaleX(0.9863);-webkit-text-stroke:0.25px #000;">76345</span><div class="a" style="left:182px;top:399px;width:289px;height:1px;background:#000;"></div><span class="t" style="left:185.0px;top:382.1px;line-height:17px;font-size:13px;color:#000;transform:scaleX(1.0820);-webkit-text-stroke:0.25px #000;">Март</span><span class="t" style="left:359.8px;top:382.1px;line-height:17px;font-size:13px;color:#000;transform:scaleX(0.9980);-webkit-text-stroke:0.25px #000;">345</span><span class="t" style="left:439.8px;top:382.1px;line-height:17px;font-size:13px;color:#000;transform:scaleX(0.9909);-webkit-text-stroke:0.25px #000;">2653</span><div class="a" style="left:182px;top:419px;width:289px;height:1px;background:#000;"></div><span class="t" style="left:184.5px;top:402.1px;line-height:17px;font-size:13px;color:#000;transform:scaleX(1.1145);-webkit-text-stroke:0.25px #000;">Апрель</span><span class="t" style="left:366.8px;top:402.1px;line-height:17px;font-size:13px;color:#000;transform:scaleX(1.0132);-webkit-text-stroke:0.25px #000;">34</span><span class="t" style="left:425.8px;top:402.1px;line-height:17px;font-size:13px;color:#000;transform:scaleX(0.9832);-webkit-text-stroke:0.25px #000;">178000</span><div class="a" style="left:182px;top:439px;width:289px;height:1px;background:#000;"></div><span class="t" style="left:185.0px;top:422.1px;line-height:17px;font-size:13px;color:#000;transform:scaleX(1.0743);-webkit-text-stroke:0.25px #000;">Май</span><span class="t" style="left:366.8px;top:422.1px;line-height:17px;font-size:13px;color:#000;transform:scaleX(1.0132);-webkit-text-stroke:0.25px #000;">43</span><span class="t" style="left:446.8px;top:422.1px;line-height:17px;font-size:13px;color:#000;transform:scaleX(0.9980);-webkit-text-stroke:0.25px #000;">435</span><div class="a" style="left:182px;top:459px;width:289px;height:1px;background:#000;"></div><span class="t" style="left:185.0px;top:442.1px;line-height:17px;font-size:13px;color:#000;transform:scaleX(1.0942);-webkit-text-stroke:0.25px #000;">Июнь</span><span class="t" style="left:366.8px;top:442.1px;line-height:17px;font-size:13px;color:#000;transform:scaleX(1.0132);-webkit-text-stroke:0.25px #000;">22</span><span class="t" style="left:439.8px;top:442.1px;line-height:17px;font-size:13px;color:#000;transform:scaleX(0.9909);-webkit-text-stroke:0.25px #000;">4234</span><div class="a" style="left:182px;top:479px;width:289px;height:1px;background:#000;"></div><span class="t" style="left:185.0px;top:462.1px;line-height:17px;font-size:13px;color:#000;transform:scaleX(1.0901);-webkit-text-stroke:0.25px #000;">Июль</span><span class="t" style="left:366.8px;top:462.1px;line-height:17px;font-size:13px;color:#000;transform:scaleX(1.0132);-webkit-text-stroke:0.25px #000;">43</span><span class="t" style="left:432.8px;top:462.1px;line-height:17px;font-size:13px;color:#000;transform:scaleX(0.9863);-webkit-text-stroke:0.25px #000;">43543</span><div class="a" style="left:182px;top:499px;width:289px;height:1px;background:#000;"></div><span class="t" style="left:184.5px;top:482.1px;line-height:17px;font-size:13px;color:#000;transform:scaleX(1.0439);-webkit-text-stroke:0.25px #000;">Август</span><span class="t" style="left:352.8px;top:482.1px;line-height:17px;font-size:13px;color:#000;transform:scaleX(0.9909);-webkit-text-stroke:0.25px #000;">5363</span><span class="t" style="left:432.8px;top:482.1px;line-height:17px;font-size:13px;color:#000;transform:scaleX(0.9863);-webkit-text-stroke:0.25px #000;">45234</span><div class="a" style="left:182px;top:519px;width:289px;height:1px;background:#000;"></div><span class="t" style="left:184.7px;top:502.1px;line-height:17px;font-size:13px;color:#000;transform:scaleX(1.0397);-webkit-text-stroke:0.25px #000;">Сентябрь</span><span class="t" style="left:359.8px;top:502.1px;line-height:17px;font-size:13px;color:#000;transform:scaleX(0.9980);-webkit-text-stroke:0.25px #000;">324</span><span class="t" style="left:425.8px;top:502.1px;line-height:17px;font-size:13px;color:#000;transform:scaleX(0.9832);-webkit-text-stroke:0.25px #000;">543534</span><div class="a" style="left:182px;top:539px;width:289px;height:1px;background:#000;"></div><span class="t" style="left:184.7px;top:522.1px;line-height:17px;font-size:13px;color:#000;transform:scaleX(1.0609);-webkit-text-stroke:0.25px #000;">Октябрь</span><span class="t" style="left:366.8px;top:522.1px;line-height:17px;font-size:13px;color:#000;transform:scaleX(1.0132);-webkit-text-stroke:0.25px #000;">31</span><span class="t" style="left:439.8px;top:522.1px;line-height:17px;font-size:13px;color:#000;transform:scaleX(0.9909);-webkit-text-stroke:0.25px #000;">4524</span><div class="a" style="left:182px;top:559px;width:289px;height:1px;background:#000;"></div><span class="t" style="left:185.0px;top:542.1px;line-height:17px;font-size:13px;color:#000;transform:scaleX(1.0565);-webkit-text-stroke:0.25px #000;">Ноябрь</span><span class="t" style="left:366.8px;top:542.1px;line-height:17px;font-size:13px;color:#000;transform:scaleX(1.0132);-webkit-text-stroke:0.25px #000;">78</span><span class="t" style="left:425.8px;top:542.1px;line-height:17px;font-size:13px;color:#000;transform:scaleX(0.9832);-webkit-text-stroke:0.25px #000;">531908</span><div class="a" style="left:182px;top:579px;width:289px;height:1px;background:#000;"></div><span class="t" style="left:184.2px;top:562.1px;line-height:17px;font-size:13px;color:#000;transform:scaleX(1.1040);-webkit-text-stroke:0.25px #000;">Декабрь</span><span class="t" style="left:359.8px;top:562.1px;line-height:17px;font-size:13px;color:#000;transform:scaleX(0.9980);-webkit-text-stroke:0.25px #000;">134</span><span class="t" style="left:425.8px;top:562.1px;line-height:17px;font-size:13px;color:#000;transform:scaleX(0.9832);-webkit-text-stroke:0.25px #000;">234524</span><div class="a" style="left:182px;top:300px;width:1px;height:280px;background:#000;"></div><div class="a" style="left:284px;top:300px;width:1px;height:280px;background:#000;"></div><div class="a" style="left:383px;top:300px;width:1px;height:280px;background:#000;"></div><div class="a" style="left:470px;top:300px;width:1px;height:280px;background:#000;"></div><div class="a" style="left:891px;top:235px;width:13px;height:525px;background:#dbdbdb;"></div><div class="a" style="left:891.5px;top:235px;width:12.5px;height:13.5px;background:#fff;border:1px solid #c6c6c6;border-right:none;"></div><svg class="a" style="left:894.5px;top:239.5px;" width="7" height="4" viewBox="0 0 7 4"><path d="M0 4l3.500-4l3.500 4z" fill="#555"/></svg><div class="a" style="left:891.5px;top:411px;width:12.5px;height:335.5px;background:#fff;border:1px solid #c6c6c6;border-right:none;"></div><div class="a" style="left:891.5px;top:746.5px;width:12.5px;height:13.5px;background:#fff;border:1px solid #c6c6c6;border-right:none;"></div><svg class="a" style="left:894.5px;top:751.5px;" width="7" height="4" viewBox="0 0 7 4"><path d="M0 0h7l-3.500 4z" fill="#555"/></svg><div class="a" style="left:32px;top:759.5px;width:856px;height:1px;background:#b4b4b4;"></div><svg class="a" style="left:56px;top:769px;" width="5" height="8" viewBox="0 0 5 8"><path d="M4.500 0.500v7l-4-3.500z" fill="#c2c2c2"/></svg><svg class="a" style="left:86px;top:769px;" width="5" height="8" viewBox="0 0 5 8"><path d="M0.500 0.500v7l4-3.500z" fill="#c2c2c2"/></svg><div class="a" style="left:130px;top:760px;width:60px;height:25px;background:#fff;border-left:1px solid #c0c0c0;border-right:1px solid #c0c0c0;"></div><div class="a" style="left:130px;top:783px;width:60px;height:2px;background:#217346;"></div><span class="t" style="left:141.4px;top:765.8px;line-height:16px;font-size:12.5px;color:#217346;transform:scaleX(1.0032);font-weight:bold;">Лист1</span><svg class="a" style="left:223px;top:765.5px;" width="16" height="16" viewBox="0 0 16 16"><circle cx="8" cy="8" r="7.300" fill="none" stroke="#6a6a6a" stroke-width="1.100"/><path d="M8 4.300v7.400M4.300 8h7.400" stroke="#6a6a6a" stroke-width="1.300"/></svg><div class="a" style="left:557px;top:770px;width:1.5px;height:1.5px;background:#9a9a9a;"></div><div class="a" style="left:557px;top:774px;width:1.5px;height:1.5px;background:#9a9a9a;"></div><div class="a" style="left:557px;top:778px;width:1.5px;height:1.5px;background:#9a9a9a;"></div><div class="a" style="left:574.5px;top:767px;width:14px;height:15px;background:#fff;border:1px solid #b8b8b8;"></div><svg class="a" style="left:579.5px;top:771px;" width="4" height="7" viewBox="0 0 4 7"><path d="M4 0v7l-4-3.500z" fill="#555"/></svg><div class="a" style="left:589.5px;top:767px;width:247px;height:15px;background:#fff;border:1px solid #c6c6c6;"></div><div class="a" style="left:836.5px;top:767px;width:37px;height:15px;background:#dadada;"></div><div class="a" style="left:873.5px;top:767px;width:14px;height:15px;background:#fff;border:1px solid #b8b8b8;"></div><svg class="a" style="left:878.5px;top:771px;" width="4" height="7" viewBox="0 0 4 7"><path d="M0 0v7l4-3.500z" fill="#555"/></svg><div class="a" style="left:32px;top:788.5px;width:872px;height:21.5px;background:#f3f3f3;"></div><div class="a" style="left:32px;top:788px;width:872px;height:1px;background:#c8c8c8;"></div><span class="t" style="left:36.3px;top:792.5px;line-height:16px;font-size:12px;color:#333;transform:scaleX(0.9535);">Страница: 1 из 1</span><svg class="a" style="left:608px;top:792px;" width="14" height="14" viewBox="0 0 14 14"><path d="M0.700 0.700h12v12h-12zM0.700 4.700h12M0.700 8.700h12M4.700 0.700v12M8.700 0.700v12" fill="none" stroke="#606060" stroke-width="1.400"/></svg><div class="a" style="left:635px;top:789px;width:40px;height:21px;background:#c6c6c6;"></div><svg class="a" style="left:648px;top:792px;" width="14" height="14" viewBox="0 0 14 14"><path d="M0.700 0.700h12.600v12h-12.600z" fill="none" stroke="#606060" stroke-width="1.300"/><path d="M3.500 3.200h7v7h-7z" fill="none" stroke="#606060" stroke-width="1"/><path d="M5 5.200h4M5 6.900h4M5 8.600h4" stroke="#606060" stroke-width=".800"/></svg><svg class="a" style="left:688px;top:792px;" width="14" height="14" viewBox="0 0 14 14"><path d="M0.700 0.700h12.600v12h-12.600z" fill="none" stroke="#606060" stroke-width="1.300"/><path d="M4.200 0.700v6.500M8.400 0.700v6.500h-7.700" fill="none" stroke="#606060" stroke-width="1.200"/></svg><div class="a" style="left:721.5px;top:798.5px;width:6.5px;height:1px;background:#555;"></div><div class="a" style="left:734px;top:798.5px;width:99px;height:1px;background:#8a8a8a;"></div><div class="a" style="left:782px;top:793px;width:5px;height:11.5px;background:#5a5a5a;"></div><div class="a" style="left:839px;top:798.5px;width:8px;height:1px;background:#555;"></div><div class="a" style="left:842.5px;top:795px;width:1px;height:8px;background:#555;"></div><span class="t" style="left:859.8px;top:792.0px;line-height:16px;font-size:12px;color:#333;transform:scaleX(0.8945);">100 %</span>
</body></html>
